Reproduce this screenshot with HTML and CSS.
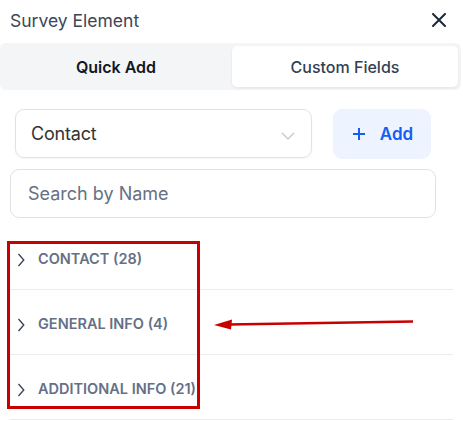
FILE: index.html
```html
<!DOCTYPE html>
<html>
<head>
<meta charset="utf-8">
<link rel="stylesheet" href="styles.css">
</head>
<body>
<div class="panel">
  <div class="header">
    <span class="title">Survey Element</span>
    <svg class="close" width="14" height="14" viewBox="0 0 14 14"><path d="M1 1L13 13M13 1L1 13" stroke="#1d2939" stroke-width="2" stroke-linecap="round"/></svg>
  </div>
  <div class="tabs">
    <div class="tab">Quick Add</div>
    <div class="tab active">Custom Fields</div>
  </div>
  <div class="controls">
    <div class="select">
      <span>Contact</span>
      <svg width="14" height="8" viewBox="0 0 14 8"><path d="M1 1L7 7L13 1" fill="none" stroke="#c4c4c4" stroke-width="1.2"/></svg>
    </div>
    <button class="add"><svg class="plus" width="12" height="12" viewBox="0 0 12 12"><path d="M6 0V12M0 6H12" stroke="#155eef" stroke-width="2"/></svg>Add</button>
  </div>
  <div class="search">Search by Name</div>
  <div class="list">
    <div class="row"><svg width="8" height="14" viewBox="0 0 8 14"><path d="M1.5 1L6.8 7L1.5 13" fill="none" stroke="#344054" stroke-width="1.3"/></svg><span>CONTACT (28)</span></div>
    <div class="row"><svg width="8" height="14" viewBox="0 0 8 14"><path d="M1.5 1L6.8 7L1.5 13" fill="none" stroke="#344054" stroke-width="1.3"/></svg><span>GENERAL INFO (4)</span></div>
    <div class="row"><svg width="8" height="14" viewBox="0 0 8 14"><path d="M1.5 1L6.8 7L1.5 13" fill="none" stroke="#344054" stroke-width="1.3"/></svg><span>ADDITIONAL INFO (21)</span></div>
  </div>
  <div class="highlight"></div>
  <svg class="arrow" width="210" height="14" viewBox="0 0 210 14"><path d="M15 8.5L199 5.5" stroke="#c80000" stroke-width="2.5"/><path d="M0 9L18 3.5L17 13.5Z" fill="#c80000"/></svg>
</div>
</body>
</html>
```
FILE: styles.css
```css
html, body {
  margin: 0;
  padding: 0;
  background: #fff;
}
body {
  font-family: Inter, "Noto Sans", sans-serif;
}
.panel {
  position: relative;
  width: 463px;
  height: 421px;
  overflow: hidden;
}
.header {
  height: 43px;
  display: flex;
  align-items: center;
  justify-content: space-between;
  padding: 0 17px 0 10px;
  box-sizing: border-box;
}
.title {
  font-size: 17.5px;
  color: #3b4658;
  margin-top: -3px;
}
.close {
  margin-top: -4px;
}
.tabs {
  width: 461px;
  height: 47px;
  box-sizing: border-box;
  background: #f4f5f7;
  border-radius: 6px;
  padding: 3px;
  display: grid;
  grid-template-columns: 1fr 1fr;
  gap: 3px;
}
.tab {
  display: flex;
  align-items: center;
  justify-content: center;
  font-size: 16px;
  font-weight: 600;
  color: #101828;
  border-radius: 5px;
}
.tab.active {
  background: #fff;
  color: #344054;
  font-weight: 500;
  box-shadow: 0 1px 3px rgba(16, 24, 40, 0.08);
}
.controls {
  display: flex;
  gap: 21px;
  margin: 19px 0 0 15px;
}
.select {
  width: 297px;
  height: 49px;
  box-sizing: border-box;
  border: 1px solid #e0e2e6;
  border-radius: 9px;
  display: flex;
  align-items: center;
  justify-content: space-between;
  padding: 0 16px 0 15px;
  font-size: 18px;
  color: #333;
  box-shadow: 0 1px 2px rgba(16, 24, 40, 0.04);
}
.select span {
  letter-spacing: -0.2px;
}
.select svg {
  margin-top: 4px;
}
.add {
  width: 98px;
  height: 50px;
  border: none;
  border-radius: 9px;
  background: #eef4ff;
  color: #155eef;
  font-family: inherit;
  font-size: 17px;
  font-weight: 600;
  display: flex;
  align-items: center;
  justify-content: center;
  padding: 0 0 0 2px;
}
.plus {
  margin-right: 15px;
}
.search {
  margin: 10px 0 0 10px;
  width: 426px;
  height: 49px;
  box-sizing: border-box;
  border: 1px solid #e0e2e6;
  border-radius: 9px;
  display: flex;
  align-items: center;
  padding-left: 17px;
  font-size: 18px;
  color: #667085;
}
.list {
  margin: 7px 0 0 10px;
  width: 443px;
}
.row {
  height: 65px;
  box-sizing: border-box;
  border-bottom: 1px solid #eaecf0;
  display: flex;
  align-items: center;
  padding-left: 7px;
  padding-top: 2px;
  gap: 13px;
  font-size: 14.5px;
  font-weight: 600;
  letter-spacing: 0;
  color: #667085;
}
.row svg {
  margin-top: 4px;
}
.highlight {
  position: absolute;
  left: 7px;
  top: 241px;
  width: 193px;
  height: 168px;
  box-sizing: border-box;
  border: 3px solid #c80000;
}
.arrow {
  position: absolute;
  left: 214px;
  top: 316px;
}
```
